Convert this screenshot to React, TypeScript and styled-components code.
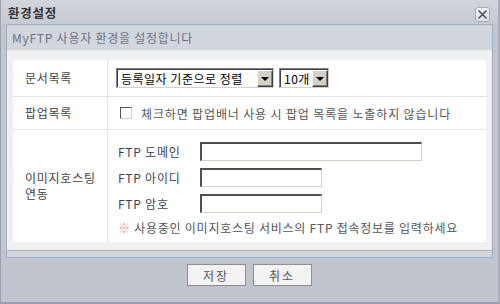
import React from "react";
import styled, { createGlobalStyle } from "styled-components";

const Global = createGlobalStyle`
  html, body { margin: 0; padding: 0; background: #c2c7cf; }
  body { font-family: "Noto Sans CJK KR", "Noto Sans", sans-serif; font-size: 12px; color: #333; letter-spacing: 0.75px; }
  * { box-sizing: border-box; }
`;

const Window = styled.div`
  width: 500px;
  height: 304px;
  display: flex;
  flex-direction: column;
  background: #c1c6ce;
  border-left: 1px solid #9aa1ad;
  border-right: 2px solid #a9afba;
  border-bottom: 2px solid #9aa1ad;
  overflow: hidden;
`;

const TitleBar = styled.div`
  height: 24px;
  flex: none;
  display: flex;
  align-items: center;
  justify-content: space-between;
  padding: 0 8px 0 7px;
  background: linear-gradient(#d2d5db, #c6cad1);
`;

const Title = styled.div`
  font-weight: bold;
  font-size: 12.5px;
  color: #333;
  line-height: 14px;
  padding-top: 2px;
`;

const CloseBtn = styled.div`
  width: 15px;
  height: 15px;
  margin-top: 4px;
  border: 1px solid #a3aab8;
  border-radius: 3px;
  background: linear-gradient(#eef0f4, #dde1e8);
  display: flex;
  align-items: center;
  justify-content: center;
`;

const Panel = styled.div`
  margin: 0 5px;
  flex: none;
  border: 1px solid #a3adc1;
  display: flex;
  flex-direction: column;
`;

const PanelHeader = styled.div`
  height: 26px;
  display: flex;
  align-items: center;
  padding-left: 5px;
  background: #d2d6dd;
  color: #6d7384;
  font-size: 12px;
  border-bottom: 1px solid #e6e8ec;
`;

const PanelBody = styled.div`
  background: #f0f0f0;
  padding: 9px 6px 8px 6px;
`;

const PanelFoot = styled.div`
  height: 7px;
  background: #d2d6dd;
  border-top: 1px solid #a9b2c4;
`;

const Table = styled.div`
  background: #fff;
  display: grid;
  grid-template-columns: 95px 1fr;
`;

const Label = styled.div<{ $h: number; $last?: boolean }>`
  height: ${(p) => p.$h}px;
  display: flex;
  align-items: center;
  padding-left: 12px;
  color: #444;
  line-height: 16px;
  border-right: 1px solid #e3e3e3;
  border-bottom: ${(p) => (p.$last ? "none" : "1px solid #e3e3e3")};
`;

const Cell = styled.div<{ $h: number; $last?: boolean }>`
  height: ${(p) => p.$h}px;
  display: flex;
  align-items: center;
  gap: 5px;
  padding-left: 8px;
  border-bottom: ${(p) => (p.$last ? "none" : "1px solid #e3e3e3")};
`;

const FtpCell = styled.div`
  height: 112px;
  display: flex;
  flex-direction: column;
  padding: 12px 0 0 10px;
  gap: 7px;
`;

const SelectBox = styled.div<{ $w: number }>`
  width: ${(p) => p.$w}px;
  height: 20px;
  display: flex;
  align-items: stretch;
  background: #fff;
  border-top: 1px solid #808080;
  border-left: 1px solid #808080;
  border-right: 1px solid #d4d0c8;
  border-bottom: 1px solid #d4d0c8;
  box-shadow: inset 1px 1px 0 #404040;
`;

const SelectText = styled.div`
  flex: 1;
  padding-left: 4px;
  display: flex;
  align-items: center;
  color: #000;
  white-space: nowrap;
  overflow: hidden;
  letter-spacing: 0.5px;
`;

const SelectBtn = styled.div`
  width: 16px;
  flex: none;
  margin: 1px 0 0 0;
  background: #d4d0c8;
  border-top: 1px solid #fff;
  border-left: 1px solid #fff;
  border-right: 1px solid #404040;
  border-bottom: 1px solid #404040;
  box-shadow: inset -1px -1px 0 #808080;
  display: flex;
  align-items: center;
  justify-content: center;
`;

const Arrow = styled.div`
  width: 0;
  height: 0;
  border-left: 4px solid transparent;
  border-right: 4px solid transparent;
  border-top: 4px solid #000;
`;

const Check = styled.div`
  width: 12px;
  height: 12px;
  margin-left: 4px;
  margin-right: 4px;
  border-top: 1px solid #555;
  border-left: 1px solid #555;
  border-right: 1px solid #d4d0c8;
  border-bottom: 1px solid #d4d0c8;
  background: #fff;
`;

const CheckText = styled.span`
  color: #555;
  letter-spacing: 0.85px;
`;

const FtpRow = styled.div`
  display: flex;
  align-items: center;
  height: 19px;
`;

const FtpLabel = styled.div`
  width: 82px;
  color: #3c3f55;
`;

const Input = styled.div<{ $w: number }>`
  width: ${(p) => p.$w}px;
  height: 19px;
  background: #fff;
  border-top: 2px solid #4e4e4e;
  border-left: 2px solid #4e4e4e;
  border-right: 1px solid #d4d0c8;
  border-bottom: 1px solid #d4d0c8;
`;

const Note = styled.div`
  color: #555;
  margin-top: -1px;
`;

const Mark = styled.span`
  color: #e88a8a;
`;

const Footer = styled.div`
  flex: 1;
  display: flex;
  justify-content: center;
  align-items: flex-start;
  padding-top: 6px;
  padding-right: 1px;
  gap: 7px;
`;

const Button = styled.div`
  width: 59px;
  height: 22px;
  display: flex;
  align-items: center;
  justify-content: center;
  background: #f3f3f3;
  border: 1px solid #8f8f8f;
  color: #555;
  font-size: 12px;
  letter-spacing: 2px;
`;

export default function App() {
  return (
    <>
      <Global />
      <Window>
        <TitleBar>
          <Title>환경설정</Title>
          <CloseBtn>
            <svg width="11" height="11" viewBox="0 0 11 11">
              <path d="M1.5 1.5 L9.5 9.5 M9.5 1.5 L1.5 9.5" stroke="#3d4560" strokeWidth="1.4" />
            </svg>
          </CloseBtn>
        </TitleBar>
        <Panel>
          <PanelHeader>MyFTP 사용자 환경을 설정합니다</PanelHeader>
          <PanelBody>
            <Table>
              <Label $h={37}>문서목록</Label>
              <Cell $h={37}>
                <SelectBox $w={158}>
                  <SelectText>등록일자 기준으로 정렬</SelectText>
                  <SelectBtn><Arrow /></SelectBtn>
                </SelectBox>
                <SelectBox $w={50}>
                  <SelectText>10개</SelectText>
                  <SelectBtn><Arrow /></SelectBtn>
                </SelectBox>
              </Cell>
              <Label $h={33}>팝업목록</Label>
              <Cell $h={33}>
                <Check />
                <CheckText>체크하면 팝업배너 사용 시 팝업 목록을 노출하지 않습니다</CheckText>
              </Cell>
              <Label $h={112} $last>
                이미지호스팅
                <br />
                연동
              </Label>
              <FtpCell>
                <FtpRow>
                  <FtpLabel>FTP 도메인</FtpLabel>
                  <Input $w={222} />
                </FtpRow>
                <FtpRow>
                  <FtpLabel>FTP 아이디</FtpLabel>
                  <Input $w={122} />
                </FtpRow>
                <FtpRow>
                  <FtpLabel>FTP 암호</FtpLabel>
                  <Input $w={122} />
                </FtpRow>
                <Note>
                  <Mark>※</Mark> 사용중인 이미지호스팅 서비스의 FTP 접속정보를 입력하세요
                </Note>
              </FtpCell>
            </Table>
          </PanelBody>
          <PanelFoot />
        </Panel>
        <Footer>
          <Button>저장</Button>
          <Button>취소</Button>
        </Footer>
      </Window>
    </>
  );
}
